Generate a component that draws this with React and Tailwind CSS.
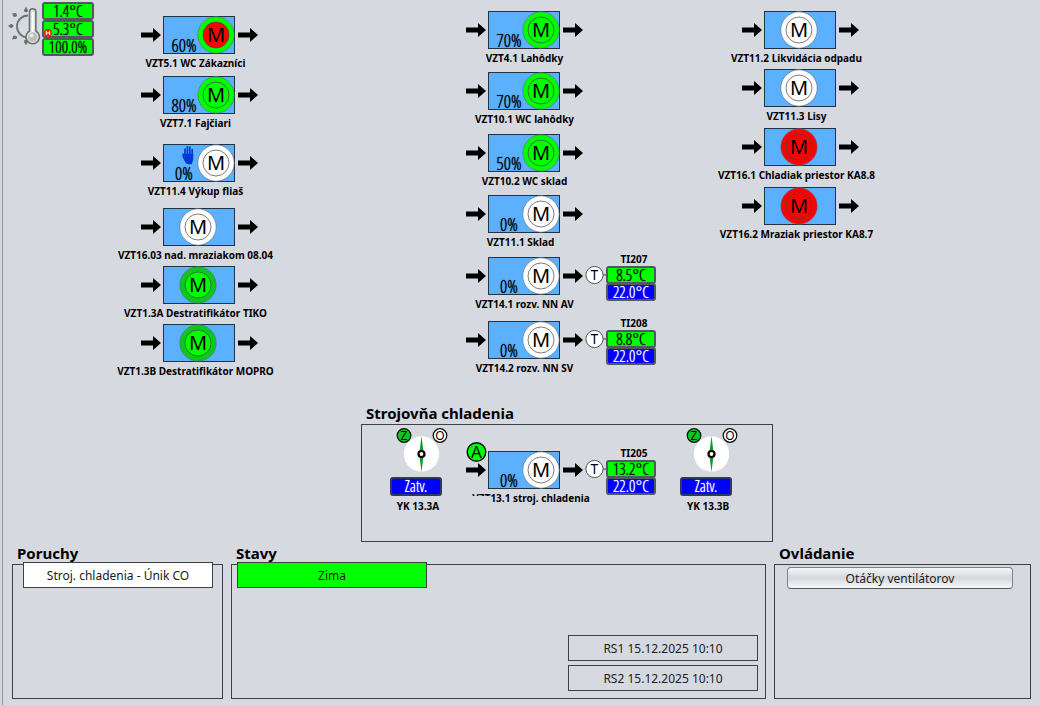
import React from 'react';

const leftUnits = [
  { name: 'VZT5.1 WC Zákazníci', speed: '60%', ring: '#00ff00', core: '#ff0000', space: 'mt-4' },
  { name: 'VZT7.1 Fajčiari', speed: '80%', ring: '#00ff00', core: '#00ff00', space: 'mt-1' },
  { name: 'VZT11.4 Výkup fliaš', speed: '0%', ring: '#ffffff', core: '#ffffff', space: 'mt-3', manual: true },
  { name: 'VZT16.03 nad. mraziakom 08.04', ring: '#ffffff', core: '#ffffff', space: 'mt-2' },
  { name: 'VZT1.3A Destratifikátor TIKO', ring: '#0cc81e', core: '#00ff00', space: 'mt-0.5' },
  { name: 'VZT1.3B Destratifikátor MOPRO', ring: '#0cc81e', core: '#00ff00', space: 'mt-0.5' },
];

const middleUnits = [
  { name: 'VZT4.1 Lahôdky', speed: '70%', ring: '#00ff00', core: '#00ff00', space: 'mt-[11px]' },
  { name: 'VZT10.1 WC lahôdky', speed: '70%', ring: '#00ff00', core: '#00ff00', space: 'mt-[5px]' },
  { name: 'VZT10.2 WC sklad', speed: '50%', ring: '#00ff00', core: '#00ff00', space: 'mt-1.5' },
  { name: 'VZT11.1 Sklad', speed: '0%', ring: '#ffffff', core: '#ffffff', space: 'mt-[5px]', labelClass: 'pr-2' },
  {
    name: 'VZT14.1 rozv. NN AV',
    speed: '0%',
    ring: '#ffffff',
    core: '#ffffff',
    space: 'mt-1.5',
    sensor: { name: 'TI207', value: '8.5°C', setpoint: '22.0°C' },
  },
  {
    name: 'VZT14.2 rozv. NN SV',
    speed: '0%',
    ring: '#ffffff',
    core: '#ffffff',
    space: 'mt-2',
    sensor: { name: 'TI208', value: '8.8°C', setpoint: '22.0°C' },
  },
];

const rightUnits = [
  { name: 'VZT11.2 Likvidácia odpadu', ring: '#ffffff', core: '#ffffff', space: 'mt-[11px]' },
  { name: 'VZT11.3 Lisy', ring: '#ffffff', core: '#ffffff', space: 'mt-0.5' },
  { name: 'VZT16.1 Chladiak priestor KA8.8', ring: '#ff0000', core: '#ff0000', space: 'mt-[3px]' },
  { name: 'VZT16.2 Mraziak priestor KA8.7', ring: '#ff0000', core: '#ff0000', space: 'mt-[3px]' },
];

function Arrow() {
  return (
    <svg className="h-4 w-5 shrink-0" viewBox="0 0 20 16" fill="#000">
      <path d="M0 5.500h12V1l8 7-8 7v-4.500H0z" />
    </svg>
  );
}

function Motor({ ring, core }) {
  return (
    <svg className="h-[38px] w-9 shrink-0 overflow-visible" viewBox="0 0 36 38">
      <circle cx="18" cy="19" r="18.2" fill={ring} stroke="#5a6a78" strokeWidth="0.6" />
      <circle cx="18" cy="19" r="13" fill={core} stroke="#444" strokeWidth="0.7" />
      <text x="18" y="26" textAnchor="middle" fontSize="20" fontFamily="Noto Sans, sans-serif" fill="#000">
        M
      </text>
    </svg>
  );
}

function Hand() {
  return (
    <svg className="h-5 w-3" viewBox="0 0 12 20" fill="none" stroke="#0038d8" strokeLinecap="round">
      <path d="M3 10V4M5.4 10V1.8M7.8 10V2.2M10.2 11V4.5" strokeWidth="1.7" />
      <path d="M1.2 9.5v1.8l3 5.5" strokeWidth="1.8" />
      <path d="M2.6 9h8.4v5.5L9.6 19H5l-2.4-4z" fill="#0038d8" strokeWidth="0.5" />
    </svg>
  );
}

function Value({ children, color = 'green' }) {
  return (
    <div
      className={`flex h-[18px] items-center justify-center rounded-[3px] border-2 border-[#505860] font-['Open_Sans_Condensed_Light','Open_Sans_Condensed','Noto_Sans',sans-serif] text-base leading-4 text-shadow-[0_0_1px_currentColor] ${
        color === 'blue' ? 'bg-[#0000ff] text-white' : 'bg-[#00ff00] text-black'
      }`}
    >
      {children}
    </div>
  );
}

function Sensor({ name, value, setpoint }) {
  return (
    <div className="col-start-3 row-span-2 row-start-1 -mt-1 flex items-start pl-0.5">
      <svg className="mt-3 h-5 w-[21px] shrink-0" viewBox="0 0 21 20">
        <path d="M18 10h3" stroke="#777" strokeWidth="1.5" />
        <circle cx="9.5" cy="10" r="8.6" fill="#fff" stroke="#555" />
        <text x="9.5" y="15" textAnchor="middle" fontSize="14" fontFamily="Noto Sans, sans-serif" fill="#000">
          T
        </text>
      </svg>
      <div className="w-[50px]">
        <div className="pl-1.5 text-center text-[10px] leading-[13px] font-bold">{name}</div>
        <Value>{value}</Value>
        <div className="-mt-px">
          <Value color="blue">{setpoint}</Value>
        </div>
      </div>
    </div>
  );
}

function Unit({ name, speed, ring, core, manual, auto, sensor, space = '', labelClass = '', children }) {
  return (
    <div className={`relative grid grid-cols-[1fr_117px_1fr] ${space}`}>
      <div className="col-start-2 row-start-1 flex h-[38px] items-center gap-0.5">
        <Arrow />
        <div
          className={`relative mr-px flex h-[38px] w-[72px] items-center border border-[#223344] bg-[#5cb1ff] ${
            speed ? 'justify-end' : 'justify-center pr-0.5'
          }`}
        >
          {speed && (
            <span className="flex w-[34px] shrink-0 items-end justify-center self-end pl-1.5 font-['Open_Sans_Condensed_Light','Open_Sans_Condensed','Noto_Sans',sans-serif] text-lg leading-4 text-shadow-[0_0_1px_currentColor]">
              {speed}
            </span>
          )}
          <Motor ring={ring} core={core} />
          {manual && (
            <span className="absolute top-0 left-[18px]">
              <Hand />
            </span>
          )}
        </div>
        <Arrow />
      </div>
      {auto && (
        <svg className="absolute -top-2.5 left-1/2 -ml-[59px] h-[22px] w-[22px]" viewBox="0 0 22 22">
          <circle cx="10.5" cy="11" r="9.3" fill="#00ff00" stroke="#111" strokeWidth="1.5" />
          <text x="10.5" y="17" textAnchor="middle" fontSize="17" fontFamily="Noto Sans, sans-serif">
            A
          </text>
        </svg>
      )}
      {sensor && <Sensor {...sensor} />}
      <div
        className={`col-span-3 col-start-1 row-start-2 text-center text-[10px] leading-[18px] font-bold whitespace-nowrap ${labelClass}`}
      >
        {name}
      </div>
      {children}
    </div>
  );
}

function Valve({ name }) {
  return (
    <div className="flex w-16 flex-col items-center">
      <svg className="h-[50px] w-16" viewBox="0 0 64 50">
        <circle cx="37.5" cy="27" r="17.7" fill="#fff" />
        <path d="M37.5 9l2.2 18-2.2 18-2.2-18z" fill="#0a9a2c" />
        <circle cx="37.5" cy="27" r="3" fill="#fff" stroke="#000" strokeWidth="2.2" />
        <circle cx="20" cy="8.5" r="6.8" fill="#0cc81e" stroke="#111" strokeWidth="1.3" />
        <text x="20" y="13" textAnchor="middle" fontSize="12" fontFamily="Noto Sans, sans-serif">
          Z
        </text>
        <circle cx="56" cy="8.5" r="6.8" fill="#fff" stroke="#111" strokeWidth="1.3" />
        <text x="56" y="13" textAnchor="middle" fontSize="12" fontFamily="Noto Sans, sans-serif">
          O
        </text>
      </svg>
      <button className="h-[19px] w-[52px] rounded-[3px] border-2 border-[#303860] bg-[#0000ff] font-['Open_Sans_Condensed_Light','Open_Sans_Condensed','Noto_Sans',sans-serif] text-base leading-[15px] text-white text-shadow-[0_0_1px_currentColor]">
        Zatv.
      </button>
      <div className="pl-1 text-[10px] leading-5 font-bold whitespace-nowrap">{name}</div>
    </div>
  );
}

function Weather() {
  return (
    <div className="flex pt-0.5 pl-1">
      <svg className="mt-1 h-11 w-[35px] shrink-0" viewBox="0 0 35 44" fill="none">
        <path d="M21 9.500a11 11 0 0 0 0 22" stroke="#687270" strokeWidth="1.8" />
        <g fill="#687270">
          <path d="M17.400 4l1.600-3.500L20.600 4v2h-3.200z" />
          <path d="M5 7.500l4-.5.8 3-2.800 1z" />
          <path d="M1 20l3.500-2 2.500 2-2.500 2z" />
          <path d="M5 33.500l1.500-4 3 .500.500 2.500z" />
          <path d="M17.400 36l1.600 3.500 1.600-3.500v-2h-3.200z" />
          <circle cx="19" cy="4.500" r="1.800" />
          <circle cx="8" cy="9" r="1.800" />
          <circle cx="4" cy="20" r="1.800" />
          <circle cx="8" cy="31.500" r="1.800" />
          <circle cx="19" cy="36" r="1.800" />
        </g>
        <path
          d="M22.500 25V6a3.200 3.200 0 0 1 6.400 0v19a6.800 6.800 0 1 1-6.400 0z"
          fill="#dcdedd"
          stroke="#687270"
          strokeWidth="1.6"
        />
        <path d="M25.700 6v20" stroke="#fff" strokeWidth="2" />
        <circle cx="25.700" cy="31" r="4.500" fill="#b9bcba" />
        <circle cx="24.500" cy="29.500" r="2" fill="#eceeed" />
      </svg>
      <div className="relative w-[52px] shrink-0">
        <Value>1.4°C</Value>
        <Value>5.3°C</Value>
        <Value>100.0%</Value>
        <svg className="absolute top-[27px] left-0.5 h-2 w-2" viewBox="0 0 8 8">
          <circle cx="4" cy="4" r="4" fill="#f5200c" />
          <path d="M2.300 2v4M5.700 2v4M2.300 4h3.400" stroke="#fff" />
        </svg>
      </div>
    </div>
  );
}

function Panel({ title, className = '', children }) {
  return (
    <section>
      <h2 className="pl-[5px] text-[15px] leading-[22px] font-bold whitespace-nowrap">{title}</h2>
      <div className={`border border-[#404040] ${className}`}>{children}</div>
    </section>
  );
}

function Status({ children, className = '' }) {
  return (
    <div
      className={`flex h-[26px] w-[190px] items-center justify-center border border-[#404040] pt-0.5 text-xs text-[#202020] ${className}`}
    >
      {children}
    </div>
  );
}

export default function App() {
  return (
    <div className="min-h-screen bg-[#d6d9e0] pl-0.5 font-['Noto_Sans',sans-serif] text-black">
      <main className="min-h-screen border-l border-[#9296a0]">
        <div className="grid grid-cols-[93fr_207fr_66fr_311fr_241fr_119fr] pb-[22px]">
          <Weather />
          <div>
            {leftUnits.map((unit) => (
              <Unit key={unit.name} labelClass="pr-2" {...unit} />
            ))}
          </div>
          <div className="col-start-4">
            {middleUnits.map((unit) => (
              <Unit key={unit.name} {...unit} />
            ))}
          </div>
          <div>
            {rightUnits.map((unit) => (
              <Unit key={unit.name} labelClass="pr-2" {...unit} />
            ))}
          </div>
        </div>

        <div className="grid grid-cols-[358fr_412fr_267fr]">
          <div className="col-start-2">
            <Panel title="Strojovňa chladenia" className="flex h-[118px] justify-between pt-0.5 pr-[34px] pl-[22px]">
              <Valve name="YK 13.3A" />
              <div className="w-[190px] pt-6">
                <div className="w-[117px]">
                  <Unit
                    name="VZT13.1 stroj. chladenia"
                    speed="0%"
                    ring="#ffffff"
                    core="#ffffff"
                    labelClass="pr-15"
                    auto
                    sensor={{ name: 'TI205', value: '13.2°C', setpoint: '22.0°C' }}
                  >
                    {/* mask over the start of the label */}
                    <div className="absolute bottom-0 left-0 h-[11px] w-[23px] bg-[#d6d9e0]" />
                  </Unit>
                </div>
              </div>
              <Valve name="YK 13.3B" />
            </Panel>
          </div>
        </div>

        <div className="grid grid-cols-[211fr_535fr_257fr] gap-2 px-[9px] pb-1.5">
          <Panel title="Poruchy" className="h-[135px] pr-2 pl-2.5">
            <Status className="-mt-[3px] bg-white">Stroj. chladenia - Únik CO</Status>
          </Panel>
          <Panel title="Stavy" className="flex h-[135px] flex-col justify-between pr-[7px] pb-[7px] pl-[5px]">
            <Status className="-mt-[3px] bg-[#00ff00]">Zima</Status>
            <div className="flex flex-col gap-1 self-end">
              <Status>RS1 15.12.2025 10:10</Status>
              <Status>RS2 15.12.2025 10:10</Status>
            </div>
          </Panel>
          <Panel title="Ovládanie" className="h-[135px] pt-0.5 pr-[17px] pl-3">
            <button className="block h-[22px] w-full rounded-[4px] border border-[#7c8284] border-b-[#505a5a] bg-linear-to-b from-[#f4f5f6] via-[#d4d7dc] to-[#f8f9fa] pt-0.5 text-xs text-[#202020]">
              Otáčky ventilátorov
            </button>
          </Panel>
        </div>
      </main>
    </div>
  );
}
